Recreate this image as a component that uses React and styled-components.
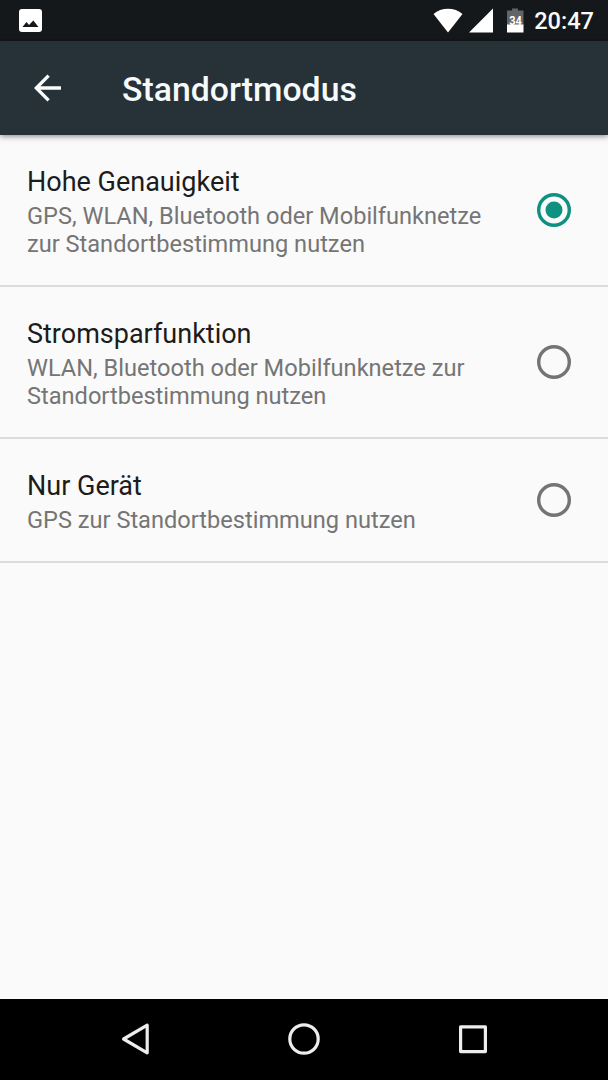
import React from "react";
import styled, { createGlobalStyle } from "styled-components";

const GlobalStyle = createGlobalStyle`
  body {
    margin: 0;
    background: #fafafa;
    font-family: Roboto, "Liberation Sans", sans-serif;
  }
`;

const Screen = styled.div`
  display: flex;
  flex-direction: column;
  width: 608px;
  height: 1080px;
  overflow: hidden;
  background: #fafafa;
`;

const StatusBar = styled.div`
  display: flex;
  align-items: center;
  justify-content: space-between;
  box-sizing: border-box;
  height: 41px;
  padding: 0 14px 0 19px;
  background: #14181b;
`;

const StatusIcons = styled.div`
  display: flex;
  align-items: center;
`;

const Icon = styled.svg`
  display: block;
  flex: none;
`;

const Clock = styled.span`
  margin-left: 10.4px;
  font-size: 23.6px;
  line-height: 28px;
  font-weight: 500;
  color: #fafafa;
`;

const BatteryText = styled.text`
  font-family: Roboto, sans-serif;
  font-size: 12.5px;
  font-weight: 700;
`;

const AppBar = styled.header`
  display: flex;
  align-items: center;
  box-sizing: border-box;
  height: 94px;
  padding-left: 34px;
  background: #273238;
  box-shadow: 0 1px 6px rgba(0, 0, 0, 0.5);
  z-index: 1;
`;

const BackButton = styled.button`
  padding: 0;
  border: 0;
  background: none;
`;

const Title = styled.h1`
  margin: 3px 0 0 60px;
  font-size: 33.8px;
  line-height: 40px;
  font-weight: 500;
  color: #f5fafa;
`;

const List = styled.main`
  flex: 1;
`;

const Row = styled.div`
  display: flex;
  align-items: center;
  justify-content: space-between;
  padding: 0 37px 0 27px;
  border-bottom: 2px solid #dcdcdc;
`;

const RowText = styled.div`
  width: 480px;
  padding: 31px 0 27px;
  white-space: pre-line;
`;

const RowTitle = styled.div`
  font-size: 27px;
  line-height: 32px;
  color: #1c1c1c;
`;

const Summary = styled.div`
  margin-top: 4px;
  font-size: 23.6px;
  line-height: 28px;
  color: #757575;
`;

const NavBar = styled.nav`
  display: flex;
  align-items: center;
  justify-content: space-between;
  box-sizing: border-box;
  height: 81px;
  padding: 0 119px 1px;
  background: #000;
`;

const options = [
  {
    title: "Hohe Genauigkeit",
    summary: "GPS, WLAN, Bluetooth oder Mobilfunknetze\nzur Standortbestimmung nutzen",
    selected: true,
  },
  {
    title: "Stromsparfunktion",
    summary: "WLAN, Bluetooth oder Mobilfunknetze zur\nStandortbestimmung nutzen",
  },
  { title: "Nur Gerät", summary: "GPS zur Standortbestimmung nutzen" },
];

function Radio({ selected }) {
  const color = selected ? "#0f9182" : "#747474";
  return (
    <Icon width="34" height="34" viewBox="0 0 34 34">
      <circle cx="17" cy="17" r="15.3" fill="none" stroke={color} strokeWidth="3.4" />
      {selected && <circle cx="17" cy="17" r="8.5" fill={color} />}
    </Icon>
  );
}

export default function App() {
  return (
    <Screen>
      <GlobalStyle />
      <StatusBar>
        <Icon width="23" height="23" viewBox="0 0 23 23">
          <rect width="23" height="23" rx="3" fill="#fff" />
          <path d="M3.5 18 L7.5 13 L10 16 L14.3 11.5 L19.5 18 Z" fill="#14181b" />
        </Icon>
        <StatusIcons>
          <Icon width="30" height="25" viewBox="0 0 30 25">
            <path d="M15 24.5 L0.5 6 C4.5 2.6 9.5 0.8 15 0.8 S25.5 2.6 29.5 6 Z" fill="#fff" />
          </Icon>
          <Icon width="37" height="25" viewBox="0 0 37 25">
            <path d="M6 24.5 H30 V0.5 Z" fill="#fff" />
          </Icon>
          <Icon width="24" height="25" viewBox="0 0 24 25">
            <path d="M12 0.5 H18 V2.5 H23.5 V17 H7 V2.5 H12 Z" fill="#626567" />
            <path d="M7 16.5 H23.5 V24.5 H7 Z" fill="#fff" />
            <BatteryText x="9.2" y="16.5" textLength="12.6" lengthAdjust="spacingAndGlyphs" fill="#fff">34</BatteryText>
          </Icon>
          <Clock>20:47</Clock>
        </StatusIcons>
      </StatusBar>
      <AppBar>
        <BackButton aria-label="Zurück">
          <Icon width="28" height="28" viewBox="0 0 28 28" fill="none" stroke="#fafcfc" strokeWidth="3.3">
            <path d="M27 14 H3 M14.6 1.6 L2.3 14 L14.6 26.4" />
          </Icon>
        </BackButton>
        <Title>Standortmodus</Title>
      </AppBar>
      <List>
        {options.map((o) => (
          <Row key={o.title}>
            <RowText>
              <RowTitle>{o.title}</RowTitle>
              <Summary>{o.summary}</Summary>
            </RowText>
            <Radio selected={o.selected} />
          </Row>
        ))}
      </List>
      <NavBar>
        <Icon width="32" height="34" viewBox="0 0 32 34" fill="none" stroke="#ededed" strokeWidth="3.2" strokeLinejoin="round">
          <path d="M28.2 3.2 V30.8 L4.6 17 Z" />
        </Icon>
        <Icon width="34" height="34" viewBox="0 0 34 34" fill="none" stroke="#ededed" strokeWidth="3.2">
          <circle cx="17" cy="17" r="14.2" />
        </Icon>
        <Icon width="32" height="34" viewBox="0 0 32 34" fill="none" stroke="#ededed" strokeWidth="3.2" strokeLinejoin="round">
          <rect x="3.6" y="4.8" width="24.8" height="24.8" />
        </Icon>
      </NavBar>
    </Screen>
  );
}
